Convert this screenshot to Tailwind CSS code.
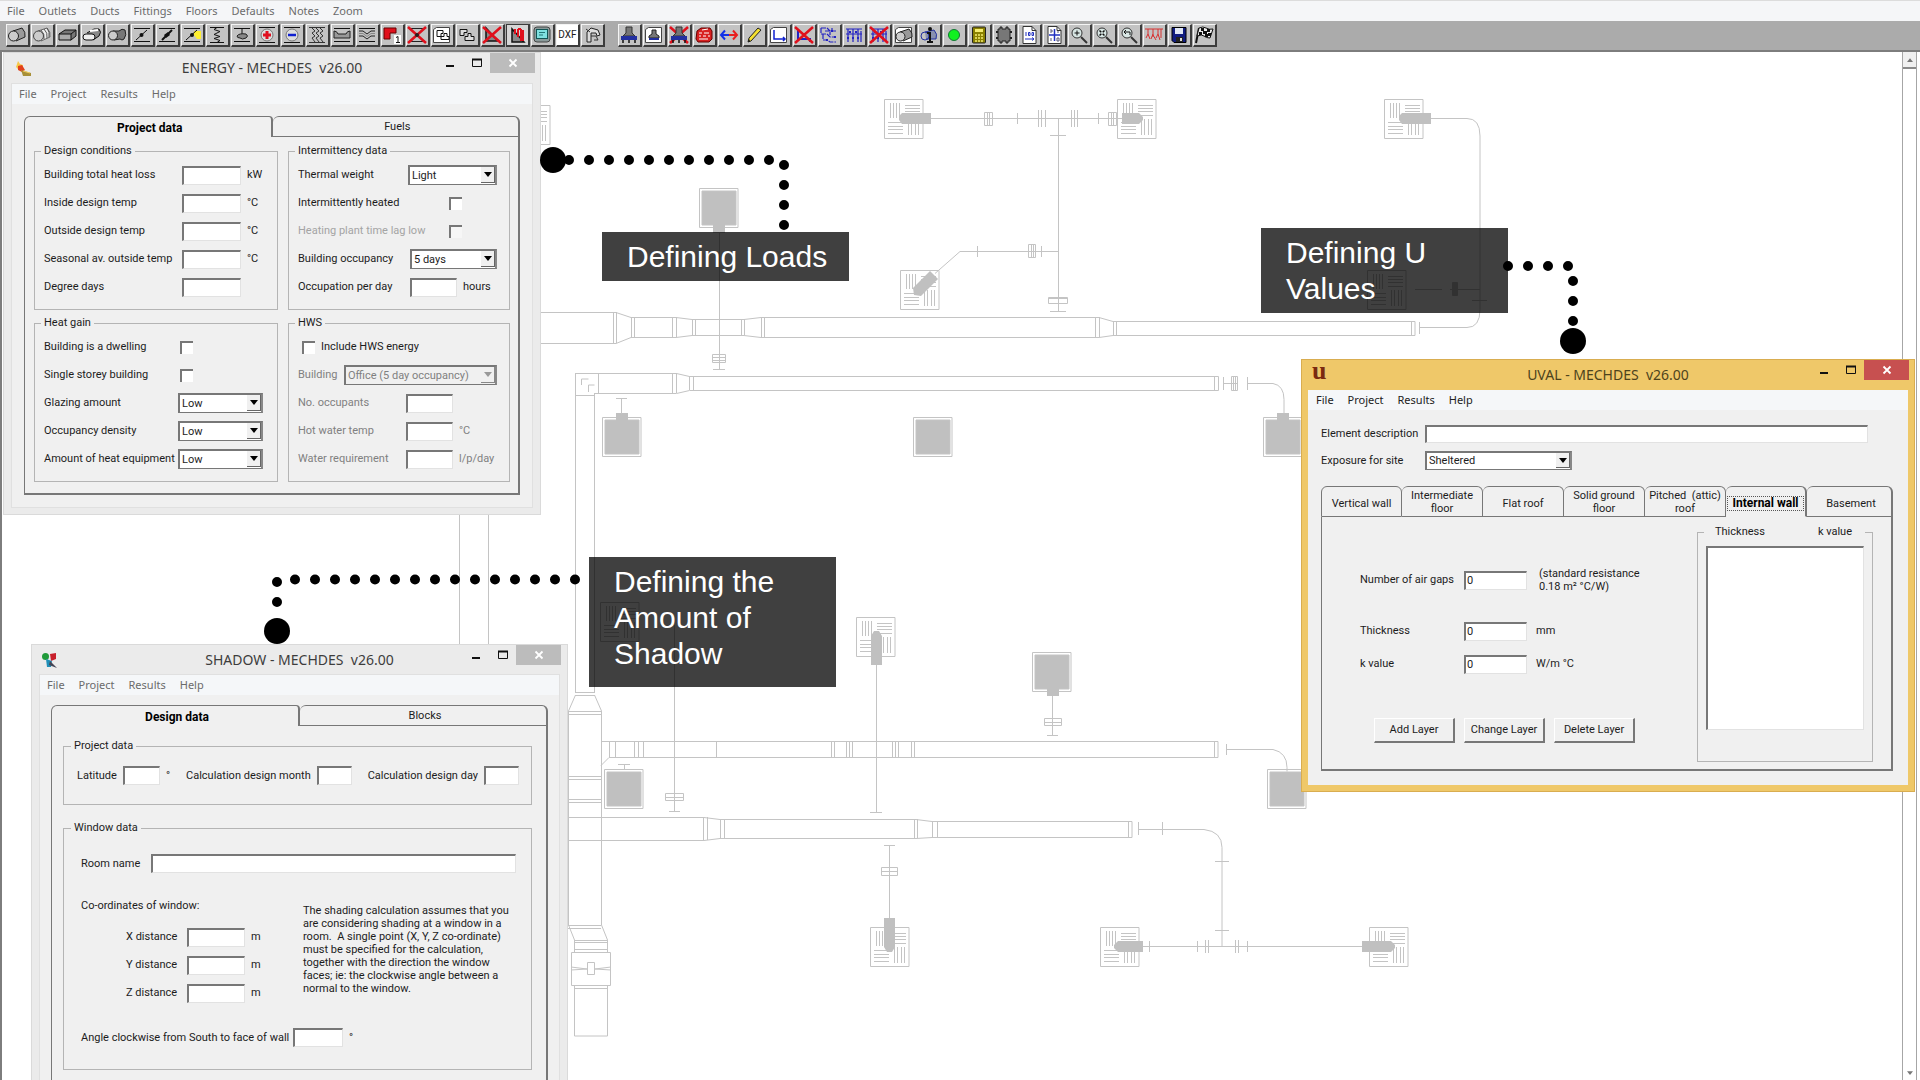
<!DOCTYPE html>
<html lang="en">
<head>
<meta charset="utf-8">
<title>MECHDES</title>
<script src="https://cdn.jsdelivr.net/npm/@tailwindcss/browser@4"></script>
</head>
<body class="flex h-screen flex-col overflow-hidden bg-white font-['Roboto','Liberation_Sans',sans-serif] text-[11px] leading-[14px] text-[#1c1c1c]">

<!-- shared drawing symbols -->
<svg width="0" height="0" class="absolute">
  <defs>
    <symbol id="grille" viewBox="0 0 40 40" overflow="visible">
      <path d="M.5 .5h38.500v39h-38.500z" fill="#fff" fill-opacity=".6" stroke="#c4c4c4"/>
      <path d="M6.500 4v15M9.500 4v15M12.500 4v15M15.500 4v15M21 6.500h15M21 9.500h15M21 12.500h15M21 16.500h15M4 23.500h15M4 27.500h15M4 30.500h15M4 34.500h15M24.500 20v16M27.500 20v16M31.500 20v16M34.500 20v16" stroke="#c4c4c4" fill="none"/>
    </symbol>
    <symbol id="unit" viewBox="0 0 40 40" overflow="visible">
      <path d="M.5 .5h38.500v39h-38.500z" fill="#fff" stroke="#c4c4c4"/>
      <path d="M3 3h34v34h-34z" fill="#c0c0c0"/>
    </symbol>
    <symbol id="cross" viewBox="0 0 20 18"><path d="M1 1L19 17M19 1L1 17" stroke="#e0101c" stroke-width="2.500"/></symbol>
    <symbol id="bars" viewBox="0 0 20 18"><path d="M2 2.500h16M2 15.500h16" stroke="#111" stroke-width="1.200"/></symbol>
    <symbol id="fan" viewBox="0 0 20 18"><path d="M7 1h6v6l3 3H4l3-3z" fill="#777" stroke="#333"/><path d="M2 10h16v4H2z" fill="#2330a0"/><path d="M4 14v3M10 14v3M16 14v3" stroke="#111" stroke-width="1.500"/></symbol>
    <symbol id="sheet" viewBox="0 0 20 18"><path d="M1.500 3.500l3-2h13v15h-16z" fill="#fff" stroke="#444"/></symbol>
    <symbol id="page" viewBox="0 0 20 18"><path d="M4 .5h9l4 4v13H4z" fill="#fff" stroke="#333"/><path d="M13 .5v4h4" fill="none" stroke="#333"/></symbol>
    <symbol id="net" viewBox="0 0 20 18"><path d="M2 3h16M2 8h16M4 3v13M9 3v13M14 3v13M17 5v11" fill="none" stroke="#2222c4" stroke-width="1.200"/><path d="M3 11h2v2H3zM8 11h2v2H8zM13 11h2v2h-2zM5 5h2v2H5zM11 5h2v2h-2z" fill="#2222c4"/></symbol>
    <symbol id="lens" viewBox="0 0 20 18"><circle cx="8" cy="7" r="5" fill="#d8e6e4" stroke="#333"/><path d="M12 11l6 6" stroke="#333" stroke-width="2"/></symbol>
    <symbol id="min" viewBox="0 0 12 12"><path d="M2 9h8" stroke="#111" stroke-width="2"/></symbol>
    <symbol id="max" viewBox="0 0 12 12"><path d="M1.500 2v7.500h9V2" fill="none" stroke="#111"/><path d="M1 2.500h10" stroke="#111" stroke-width="2"/></symbol>
    <symbol id="close" viewBox="0 0 12 12"><path d="M2.500 2.500l7 7M9.500 2.500l-7 7" stroke="#fff" stroke-width="1.800"/></symbol>
    <symbol id="down" viewBox="0 0 8 5"><path d="M0 0h8L4 5z" fill="currentColor"/></symbol>
  </defs>
</svg>

<nav class="flex h-[21px] shrink-0 items-center gap-[14px] border-t border-[#dcdcdc] bg-[#f5f6f8] pl-[7px] font-['Noto_Sans',sans-serif] text-[11px] text-[#6b6b6b]">
  <a href="#">File</a><a href="#">Outlets</a><a href="#">Ducts</a><a href="#">Fittings</a><a href="#">Floors</a><a href="#">Defaults</a><a href="#">Notes</a><a href="#">Zoom</a>
</nav>

<div role="toolbar" aria-label="Drawing tools" class="flex h-[29px] shrink-0 items-center gap-[13px] bg-[#ababab] pl-[6px] [&_button]:h-[23px] [&_button]:w-6 [&_button]:border-t [&_button]:border-l [&_button]:border-r-2 [&_button]:border-b-2 [&_button]:border-t-[#f4f4f4] [&_button]:border-l-[#f4f4f4] [&_button]:border-r-[#3c3c3c] [&_button]:border-b-[#3c3c3c] [&_button]:bg-[#c3c3c3] [&_svg]:h-[18px] [&_svg]:w-[20px] [&_svg]:fill-none">
  <div class="flex gap-px">
    <button aria-label="Round duct"><svg viewBox="0 0 20 18"><path d="M6 5l9-3q4 4 3 9l-9 4" fill="#999" stroke="#222"/><circle cx="6.500" cy="10" r="5" fill="#ccc" stroke="#222"/></svg></button>
    <button aria-label="Flexible duct"><svg viewBox="0 0 20 18"><path d="M6 5l9-3q4 4 3 9l-9 4" fill="#eee" stroke="#666"/><path d="M9 4q4 4 3 9M12 3q4 4 3 9M15 2q3 4 2 9" stroke="#555"/><circle cx="6.500" cy="10" r="5" fill="#ccc" stroke="#444"/></svg></button>
    <button aria-label="Rectangular duct"><svg viewBox="0 0 20 18"><path d="M2 8l6-4h11v6l-5 4z" fill="#777" stroke="#111"/><path d="M2 8h12v6H2z" fill="#aaa" stroke="#111"/><path d="M14 8l5-4" stroke="#111"/></svg></button>
    <button aria-label="Oval duct"><svg viewBox="0 0 20 18"><path d="M5 7l7-4h5q3 3 0 7l-6 4" fill="#888" stroke="#111"/><path d="M8 5l8-1" stroke="#fff" stroke-width="2"/><rect x="1" y="8" width="12" height="6" rx="3" fill="#eee" stroke="#111"/></svg></button>
    <button aria-label="Bent duct"><svg viewBox="0 0 20 18"><path d="M6 5h6q3-3 6-1 2 5-1 9-2 2-4 0l-6 1" fill="#777" stroke="#222"/><circle cx="6" cy="9.500" r="4.500" fill="#ccc" stroke="#222"/></svg></button>
    <button aria-label="Damper"><svg viewBox="0 0 20 18"><use href="#bars"/><path d="M4 14L15 4" stroke="#111"/><circle cx="9.500" cy="9" r="2" fill="#111"/></svg></button>
    <button aria-label="Fire damper"><svg viewBox="0 0 20 18"><use href="#bars"/><path d="M5 14L15 4" stroke="#111" stroke-width="2"/><path d="M7 9l4-3 2 3-4 3z" fill="#111"/></svg></button>
    <button aria-label="Motor damper"><svg viewBox="0 0 20 18"><use href="#bars"/><path d="M12 5h7v8h-4l-3-4z" fill="#ffef30"/><path d="M4 14L15 4" stroke="#111"/><circle cx="10" cy="9" r="2" fill="#111"/></svg></button>
    <button aria-label="Coil"><svg viewBox="0 0 20 18"><path d="M3 1.500h14M3 16.500h14M10 1.500l-3 2 6 2-6 3 6 2-6 2 6 2-3 2" stroke="#111"/></svg></button>
    <button aria-label="Sensor"><svg viewBox="0 0 20 18"><use href="#bars"/><path d="M10 2v6" stroke="#111"/><path d="M5 10q2-3 9-2 3 2 0 4-4 2-6 0-3 0-3-2z" fill="#888" stroke="#222"/></svg></button>
    <button aria-label="Heater"><svg viewBox="0 0 20 18"><path d="M2 1.500h16M2 16.500h16" stroke="#111"/><circle cx="10" cy="9" r="6" fill="#ddd" stroke="#777"/><path d="M10 5v8M6 9h8" stroke="#e01020" stroke-width="3"/></svg></button>
    <button aria-label="Cooler"><svg viewBox="0 0 20 18"><path d="M2 1.500h16M2 16.500h16" stroke="#111"/><circle cx="10" cy="9" r="6" fill="#ddd" stroke="#777"/><path d="M6 9h8" stroke="#1020d0" stroke-width="2.500"/></svg></button>
    <button aria-label="Filter"><svg viewBox="0 0 20 18"><path d="M2 1.500h16M2 16.500h16M5 2l3 3-3 2 3 3-3 2 3 4M9 2l3 3-3 2 3 3-3 2 3 4M13 2l3 3-3 2 3 3-3 2 3 4" stroke="#333"/></svg></button>
    <button aria-label="Silencer"><svg viewBox="0 0 20 18"><use href="#bars"/><path d="M2 5q3 0 4 3h8q1-3 4-3v7H2z" fill="#999" stroke="#222"/></svg></button>
    <button aria-label="Flexible joint"><svg viewBox="0 0 20 18"><use href="#bars"/><path d="M2 5h4l4 3 4-3h4M2 10h4l4 3 4-3h4" stroke="#222"/><path d="M2 7.500h4l4 3 4-3h4" stroke="#888"/></svg></button>
    <button aria-label="Bend 1"><svg viewBox="0 0 20 18"><path d="M2 2h12v5H8v6H2z" fill="#e0101c" stroke="#600"/><path d="M12 9h7v9h-7z" fill="#fff"/><path d="M14 11.500l2-1v6M14 16.500h4" stroke="#111"/></svg></button>
    <button aria-label="Delete fitting"><svg viewBox="0 0 20 18"><path d="M3 2.500h14M3 15.500h14" stroke="#222"/><use href="#cross"/><circle cx="10" cy="9" r="2" fill="#222"/></svg></button>
    <button aria-label="Copy floor"><svg viewBox="0 0 20 18"><use href="#sheet"/><path d="M5 4.500h6v3H9v3H5zM9 13.500v-3h3v-3h3v3h2v3z" stroke="#111"/></svg></button>
    <button aria-label="Copy"><svg viewBox="0 0 20 18"><path d="M3 3.500h7v3H7v3H3zM8 14.500v-4h3v-3h3v3h3v4z" fill="#ddd" stroke="#111"/></svg></button>
    <button aria-label="Delete triangle"><svg viewBox="0 0 20 18"><path d="M4 2v13h12z" fill="#888" stroke="#111" stroke-width="1.500"/><use href="#cross"/></svg></button>
    <button aria-label="Set square" aria-pressed="true" class="border-t-[#3c3c3c]! border-l-[#3c3c3c]! bg-[#d6d6d6]!"><svg viewBox="0 0 20 18"><path d="M5 3v13h12z" fill="#888" stroke="#111" stroke-width="1.500"/><path d="M8 3v5M11 3v8M14 3v12M11 3h3M16 4v11" stroke="#e0101c" stroke-width="2"/></svg></button>
    <button aria-label="Screen"><svg viewBox="0 0 20 18"><rect x="2" y="1" width="16" height="15" rx="3" fill="#8a9a9a" stroke="#444"/><rect x="4.500" y="3.500" width="11" height="9" fill="#7fe0e0" stroke="#155"/><path d="M7 6.500h6M7 9h4" stroke="#277"/></svg></button>
    <button class="bg-white! text-[10px] leading-[18px]">DXF</button>
    <button aria-label="Robot"><svg viewBox="0 0 20 18"><path d="M5 16V6l4-4 7 2 2 5-3 1-1-3H9v9z" fill="#ddd" stroke="#222"/><path d="M4 3l4 3M9 10h5l2 4h-4" stroke="#333"/></svg></button>
  </div>
  <div class="flex gap-px">
    <button aria-label="Fan"><svg viewBox="0 0 20 18"><use href="#fan"/></svg></button>
    <button aria-label="Fan sheet"><svg viewBox="0 0 20 18"><use href="#sheet"/><path d="M8 4h4v4l3 2v2H5v-2l3-2z" fill="#777" stroke="#222"/><path d="M5 12h10v2H5z" fill="#2330a0"/></svg></button>
    <button aria-label="Delete fan"><svg viewBox="0 0 20 18"><use href="#cross"/><use href="#fan"/></svg></button>
    <button aria-label="Supplier"><svg viewBox="0 0 20 18"><path d="M3 5l4-3h9l2 3v8l-3 3H4l-2-3z" fill="#d82020" stroke="#600"/><path d="M5 7h3M10 7h5M5 10h2M9 10h3M14 10h2M5 13h9M8 4l6-1" stroke="#fff"/></svg></button>
    <button aria-label="Move"><svg viewBox="0 0 20 18"><path d="M10 9H2M6 4.500L2 9l4 4.500" stroke="#1030e8" stroke-width="2"/><path d="M10 9h8M14 4.500L18 9l-4 4.500" stroke="#e82020" stroke-width="2"/></svg></button>
    <button aria-label="Pencil"><svg viewBox="0 0 20 18"><path d="M4 16l1-4L14 2l3 2L7 15z" fill="#f4e030" stroke="#222"/><path d="M4 16l1-3 1 2z" fill="#111"/></svg></button>
    <button aria-label="Draw line"><svg viewBox="0 0 20 18"><use href="#sheet"/><path d="M5 4v9h11M14 11l2 2-2 2" stroke="#1020d0" stroke-width="1.500"/></svg></button>
    <button aria-label="Delete line"><svg viewBox="0 0 20 18"><path d="M4 4v9h12v3" stroke="#2222c4" stroke-width="2"/><use href="#cross"/></svg></button>
    <button aria-label="Network"><svg viewBox="0 0 20 18"><path d="M2 2h6l3 3h6M2 2v6h6l3 3h6M4 8v6h4l3 2h6M6 5h5v4M13 2v3" stroke="#2222c4" stroke-width="1.200" stroke-dasharray="5 1"/><path d="M12 4h2v2h-2zM15 10h2v2h-2zM7 13h2v2H7z" fill="#2222c4"/></svg></button>
    <button aria-label="Network grid"><svg viewBox="0 0 20 18"><use href="#net"/></svg></button>
    <button aria-label="Delete network"><svg viewBox="0 0 20 18"><use href="#net"/><use href="#cross"/></svg></button>
    <button aria-label="Duct sheet"><svg viewBox="0 0 20 18"><use href="#sheet"/><path d="M6 6l9-3q4 4 3 8l-9 4" fill="#999" stroke="#222"/><circle cx="6.500" cy="10.500" r="4.500" fill="#ccc" stroke="#222"/></svg></button>
    <button aria-label="Duct info"><svg viewBox="0 0 20 18"><path d="M6 6l9-2q4 4 2 9H7" fill="#8890b0" stroke="#2230a0"/><circle cx="6" cy="10" r="4" stroke="#2230a0"/><circle cx="11" cy="3" r="2" fill="#111"/><path d="M11 6v10M8 7h3M8 16h6" stroke="#111" stroke-width="2"/></svg></button>
    <button aria-label="Run"><svg viewBox="0 0 20 18"><circle cx="10" cy="9" r="5.500" fill="#10f020" stroke="#173"/></svg></button>
    <button aria-label="Calculator"><svg viewBox="0 0 20 18"><rect x="3.500" y="1" width="13" height="16" rx="1" fill="#8a8000" stroke="#222"/><path d="M6 3h8v3H6z" fill="#f4ec70"/><path d="M6 9h8M6 12h8M6 15h8" stroke="#f4ec70" stroke-width="1.500" stroke-dasharray="2 1"/></svg></button>
    <button aria-label="Chip"><svg viewBox="0 0 20 18"><path d="M4 3h2V1h2v2h4V1h2v2h2v12h-2v2h-2v-2H8v2H6v-2H4z" fill="#777" stroke="#222"/><path d="M2 6h2M2 12h2M16 6h2M16 12h2" stroke="#222" stroke-width="2"/></svg></button>
    <button aria-label="Scale"><svg viewBox="0 0 20 18"><use href="#page"/><path d="M7 6v4M9.500 6.500h1.500v3h-1.500zM13 6.500h1.500v3H13zM6 13h9M13 11.500l2 1.500-2 1.500" stroke="#2030c0"/></svg></button>
    <button aria-label="Grid"><svg viewBox="0 0 20 18"><use href="#page"/><path d="M10.500 3v12M5 9h11" stroke="#2030c0" stroke-width="1.500"/><path d="M6 4h2v2H6M13 6h2M7 12v3M13 12h2v3h-2z" stroke="#557"/></svg></button>
    <button aria-label="Zoom in"><svg viewBox="0 0 20 18"><use href="#lens"/><path d="M5.500 7h5M8 4.500v5" stroke="#111"/></svg></button>
    <button aria-label="Zoom all"><svg viewBox="0 0 20 18"><use href="#lens"/><path d="M5.500 4.500l5 5M10.500 4.500l-5 5" stroke="#111" stroke-width="1.500" stroke-dasharray="2.500 2"/></svg></button>
    <button aria-label="Zoom previous"><svg viewBox="0 0 20 18"><use href="#lens"/><path d="M11 9V6H5M7 4L5 6l2 2" stroke="#111"/></svg></button>
    <button aria-label="Layout"><svg viewBox="0 0 20 18"><path d="M1 3h18M4 3v5M9 3v8M14 3v5M17 3v9M4 8l-2 4M4 8l2 5M9 8l-2 5M9 9l3 5M14 8l-2 4M14 8l2 6" stroke="#d83030"/></svg></button>
    <button aria-label="Save"><svg viewBox="0 0 20 18"><path d="M3 1.500h14v15H5l-2-2z" fill="#101c80" stroke="#000"/><path d="M6 2h8v6H6z" fill="#dfe6f4"/><path d="M7 11h7v5H7z" fill="#222"/><path d="M11 12h2v3h-2z" fill="#ddd"/></svg></button>
    <button aria-label="Finish"><svg viewBox="0 0 20 18"><path d="M5 2l-3 15" stroke="#111" stroke-width="2"/><path d="M5 2q4-2 7 0t7 1l-3 9q-4 0-6-2t-7 0z" fill="#eee" stroke="#111"/><path d="M7 2h3v3H7zM13 3h3v3h-3zM9 5h4v3H9zM14 7h3v3h-3zM5 6h3v3H5zM11 8h3v3h-3z" fill="#111"/></svg></button>
  </div>
</div>

<main class="relative flex-1 overflow-hidden border-t-2 border-l-2 border-[#7d7d7d] bg-white">

  <!-- ductwork plan -->
  <svg class="absolute inset-0 h-full w-full" aria-label="Ductwork plan">
    <g transform="translate(-2 -52)" fill="none" stroke="#c4c4c4">
      <path d="M459.500 500V650M488.500 500V650"/>
      <use href="#grille" x="511" y="105" width="40" height="40"/>
      <use href="#grille" x="884" y="99" width="40" height="40"/>
      <use href="#grille" x="1117" y="99" width="40" height="40"/>
      <use href="#grille" x="1384" y="99" width="40" height="40"/>
      <use href="#grille" x="900" y="270" width="40" height="40"/>
      <use href="#grille" x="1367" y="270" width="40" height="40"/>
      <use href="#grille" x="600" y="602" width="40" height="40"/>
      <use href="#grille" x="856" y="617" width="40" height="40"/>
      <use href="#grille" x="870" y="927" width="40" height="40"/>
      <use href="#grille" x="1100" y="927" width="40" height="40"/>
      <use href="#grille" x="1369" y="927" width="40" height="40"/>
      <use href="#unit" x="699" y="188" width="40" height="40"/>
      <use href="#unit" x="602" y="417" width="40" height="40"/>
      <use href="#unit" x="913" y="417" width="40" height="40"/>
      <use href="#unit" x="1263" y="417" width="40" height="40"/>
      <use href="#unit" x="1032" y="652" width="40" height="40"/>
      <use href="#unit" x="604" y="769" width="40" height="40"/>
      <use href="#unit" x="1267" y="769" width="40" height="40"/>
      <g fill="#c0c0c0" stroke="none">
        <path d="M713 223h12v10h-12zM616 413h12v8h-12zM1277 413h12v8h-12zM1047 686h12v10h-12z"/>
        <path d="M931 113v11h-29l-3-4v-4l3-3zM1122 113h17l4 4v3l-4 4h-17zM1431 113v11h-29l-3-4v-4l3-3z"/>
        <path d="M871 665v-29l3-5h5l3 5v29zM884 918h11v29l-3 5h-5l-3-5zM1143 941v11h-25l-4-4v-3l4-4zM1362 941h29l4 4v3l-4 4h-29z"/>
        <path d="M930 271l8 8-17 17-7-1-1-7z"/>
      </g>
      <!-- top trunk -->
      <path d="M541 312.500h75l15 5h45l16 2h52l17-2h338l14 4h302v14h-302l-14 2h-338l-17-2h-52l-16 2h-45l-15 6h-75M613.500 312v31M616.500 312v31M631.500 317v20M634.500 317v20M672.500 317v20M676.500 317v20M692.500 319v16M695.500 319v16M741.500 319v16M744.500 319v16M761.500 317v20M764.500 317v20M1095.500 317v20M1099.500 317v20M1113.500 321v14M1116.500 321v14M1411.500 321v14"/>
      <path d="M1419.500 322v12M1419 327.500h48q13 0 13-18V136q0-17.500-13-17.500h-36M1415 289.500h27M1450 289.500h30M1472 300.500h15"/>
      <path d="M1452.500 282.500h5v13h-5z" fill="#c4c4c4"/>
      <!-- top branch -->
      <path d="M931 118.500h191M984.500 112.500h8v13h-8zM987.500 112v13M989.500 112v13M1017.500 113v11M1038.500 110v17M1041.500 110v17M1045.500 110v17M1071.500 110v17M1074.500 110v17M1077.500 110v17M1098.500 113v11M1108.500 112.500h8v13h-8zM1111.500 112v13M1113.500 112v13M1058.500 118v193M1050 135.500h16M1048.500 297.500h19v6h-19zM1048 298.500h19M1050 311.500h16M1058 251.500h-98l-25 22M977.500 246v11M1041.500 246v11M1028.500 244.500h7v13h-7zM1031.500 244v13M1033.500 244v13"/>
      <!-- second trunk -->
      <path d="M575.500 373.500h101l13 3h529v14h-529l-13 3h-82M575.500 373v319M594.500 393v299M598.500 373v20M575 395.500h19M581.500 385v-6h7M588.500 392v-7h6M672.500 373v20M676.500 373v20M689.500 376v14M693.500 376v14M1214.500 376v14M1223.500 377v13M1223 383.500h14M1231.500 376.500h6v14h-6zM1233.500 376v14M1235.500 376v14M1247.500 377v13M1247 383.500h26q11 2 11 16v14"/>
      <path d="M719.500 232v137M712.500 354.500h13v8h-13zM712 357.500h13M712 360.500h13M713 369.500h12M621.500 398v16M616 398.500h11"/>
      <!-- riser -->
      <path d="M575 692.500h20M575 695.500h20M575.500 695l-7 16v214l6 15v12M594.500 695l7 16v214l6 15v12M568 711.500h33M568 714.500h33M568 776.500h33M568 779.500h33M568 799.500h33M568 802.500h33M568 925.500h33M568 928.500h33M574 940.500h33M574 942.500h33M574 949.500h33M571.500 952.500h39v33h-39zM587.500 962.500h7v12h-7zM571 967l16 2-16 1M611 967l-16 2 16 1M574.500 985v51h33v-51M574 988.500h33"/>
      <!-- branch duct -->
      <path d="M601 741.500h617v16H609l-8 8M609.500 741v16M615.500 741v16M634.500 741v16M638.500 741v16M643.500 741v16M716.500 741v16M831.500 741v16M834.500 741v16M846.500 741v16M849.500 741v16M852.500 741v16M892.500 741v16M895.500 741v16M898.500 741v16M911.500 741v16M914.500 741v16M1214.500 741v16M1226.500 744v11M1226 749.500h47q14 3 14 18v4"/>
      <!-- lower trunk -->
      <path d="M568 817.500h136l16 2h196l16 2h200v16H932l-16 1H720l-16 2H568M703.500 817v23M707.500 817v23M720.500 819v19M724.500 819v19M914.500 819v19M917.500 819v19M932.500 821v16M937.500 821v16M1128.500 821v16M1138.500 822v13M1138 829.500h66q18 2 18 18v99M1162.500 822v13M1215 861.500h14M1215 930.500h14"/>
      <path d="M1143 946.500h219M1149.500 941v11M1197.500 941v11M1205.500 940v13M1208.500 940v13M1235.500 940v13M1238.500 940v13M1247.500 941v11"/>
      <path d="M674.500 625v186M665.500 793.500h18v7h-18zM665 797.500h18M669 811.500h11M876.500 665v147M870 812.500h12M1052.500 696v39M1044.500 718.500h17v7h-17zM1044 722.500h17M1047 735.500h11M889.500 845v73M884 845.500h11M881.500 867.500h16v8h-16zM881 871.500h16M624.500 764v6M618 764.500h12"/>
    </g>
  </svg>

  <!-- canvas scroll bar -->
  <div class="absolute inset-y-0 right-[3px] flex w-[15px] flex-col justify-between border-x border-[#a6a6a6] bg-white">
    <button aria-label="Scroll up" class="grid h-[17px] place-items-center border-b-2 border-[#8a8a8a] bg-[#f0f0f0] text-[#777]"><svg class="h-[4px] w-[6px] rotate-180"><use href="#down"/></svg></button>
    <button aria-label="Scroll down" class="grid h-[15px] place-items-center text-[#777]"><svg class="h-[4px] w-[6px]"><use href="#down"/></svg></button>
  </div>

  <!-- ENERGY -->
  <section class="absolute top-0 left-px w-[538px] border border-[#dadada] bg-[#ebebeb] px-[7px] pb-[6px]">
    <header class="-mx-[2px] grid h-[30px] grid-cols-[105px_1fr_105px]">
      <svg class="mt-[7px] ml-[6px] size-[17px]" viewBox="0 0 17 17"><path d="M3 1l2 3 3 1 0 4-4 1-3-3z" fill="#f6c84a"/><path d="M3 6l4-1 3 5-3 2-4-2z" fill="#e2401c"/><path d="M6 10l10 3v3H8z" fill="#a89038"/><path d="M8 11l7 2" stroke="#f2d060"/></svg>
      <h2 class="self-center text-center font-['Noto_Sans',sans-serif] text-[14px] leading-5 whitespace-pre text-[#3d3d3d]">ENERGY - MECHDES  v26.00</h2>
      <div class="flex items-start justify-end">
        <button aria-label="Minimise" class="grid h-5 w-[27px] place-items-center"><svg class="size-3"><use href="#min"/></svg></button>
        <button aria-label="Maximise" class="grid h-5 w-[27px] place-items-center"><svg class="size-3"><use href="#max"/></svg></button>
        <button aria-label="Close" class="grid h-5 w-[45px] place-items-center bg-[#bcbcbc]"><svg class="size-3"><use href="#close"/></svg></button>
      </div>
    </header>
    <div class="border border-[#e0e0e0] bg-[#f0f0f0]">
      <nav class="flex h-5 items-center gap-[14px] bg-[#f5f7f9] pl-[7px] font-['Noto_Sans',sans-serif] text-[#6b6b6b]"><a href="#">File</a><a href="#">Project</a><a href="#">Results</a><a href="#">Help</a></nav>
      <div class="px-3 pt-3 pb-3">
        <div role="tablist" class="flex h-[21px]">
          <button role="tab" aria-selected="true" class="flex-1 rounded-tl-md rounded-tr-sm border-t border-r-2 border-l border-[#777] pt-px pl-1 text-[12px] font-bold text-black">Project data</button>
          <button role="tab" class="flex-1 rounded-t-md border-t border-r-2 border-b border-[#777] pl-1">Fuels</button>
        </div>
        <div class="grid grid-cols-[244px_222px] gap-x-[10px] gap-y-[6px] border-r-2 border-b-2 border-l border-[#777] pt-[7px] pb-[11px] pl-[9px]">
          <fieldset class="h-[166px] border border-[#b4b4b4] pt-[3px] pl-[9px]">
            <legend class="-ml-[3px] px-[3px]">Design conditions</legend>
            <div class="flex h-7 items-center"><label for="e1" class="w-[138px]">Building total heat loss</label><input id="e1" class="mr-[6px] h-[19px] w-[59px] border-t-2 border-r border-b border-l-2 border-t-[#777] border-r-[#e2e2e2] border-b-[#e2e2e2] border-l-[#777] bg-white">kW</div>
            <div class="flex h-7 items-center"><label for="e2" class="w-[138px]">Inside design temp</label><input id="e2" class="mr-[6px] h-[19px] w-[59px] border-t-2 border-r border-b border-l-2 border-t-[#777] border-r-[#e2e2e2] border-b-[#e2e2e2] border-l-[#777] bg-white">°C</div>
            <div class="flex h-7 items-center"><label for="e3" class="w-[138px]">Outside design temp</label><input id="e3" class="mr-[6px] h-[19px] w-[59px] border-t-2 border-r border-b border-l-2 border-t-[#777] border-r-[#e2e2e2] border-b-[#e2e2e2] border-l-[#777] bg-white">°C</div>
            <div class="flex h-7 items-center"><label for="e4" class="w-[138px]">Seasonal av. outside temp</label><input id="e4" class="mr-[6px] h-[19px] w-[59px] border-t-2 border-r border-b border-l-2 border-t-[#777] border-r-[#e2e2e2] border-b-[#e2e2e2] border-l-[#777] bg-white">°C</div>
            <div class="flex h-7 items-center"><label for="e5" class="w-[138px]">Degree days</label><input id="e5" class="h-[19px] w-[59px] border-t-2 border-r border-b border-l-2 border-t-[#777] border-r-[#e2e2e2] border-b-[#e2e2e2] border-l-[#777] bg-white"></div>
          </fieldset>
          <fieldset class="h-[166px] border border-[#b4b4b4] pt-[3px] pl-[9px]">
            <legend class="-ml-[3px] px-[3px]">Intermittency data</legend>
            <div class="flex h-7 items-center"><label for="e6" class="w-[110px]">Thermal weight</label><span class="relative h-5 w-[89px]"><select id="e6" class="h-full w-full appearance-none border-2 border-r-[#888] border-b border-[#777] bg-white pl-[2px]"><option>Light</option></select><span class="pointer-events-none absolute inset-y-[2px] right-[2px] grid w-[14px] place-items-center border-r border-b border-[#666] bg-[#f0f0f0] text-black"><svg class="h-[5px] w-2"><use href="#down"/></svg></span></span></div>
            <div class="flex h-7 items-center"><label for="e7" class="w-[151px]">Intermittently heated</label><input id="e7" type="checkbox" class="size-[13px] appearance-none border-t-2 border-l-2 border-[#777] bg-white"></div>
            <div class="flex h-7 items-center"><label for="e8" class="w-[151px] text-[#a4a4a4]">Heating plant time lag low</label><input id="e8" type="checkbox" disabled class="size-[13px] appearance-none border-t-2 border-l-2 border-[#777] bg-[#f6f6f6]"></div>
            <div class="flex h-7 items-center"><label for="e9" class="w-[112px]">Building occupancy</label><span class="relative h-5 w-[87px]"><select id="e9" class="h-full w-full appearance-none border-2 border-r-[#888] border-b border-[#777] bg-white pl-[2px]"><option>5 days</option></select><span class="pointer-events-none absolute inset-y-[2px] right-[2px] grid w-[14px] place-items-center border-r border-b border-[#666] bg-[#f0f0f0] text-black"><svg class="h-[5px] w-2"><use href="#down"/></svg></span></span></div>
            <div class="flex h-7 items-center"><label for="e10" class="w-[112px]">Occupation per day</label><input id="e10" class="mr-[6px] h-[19px] w-[47px] border-t-2 border-r border-b border-l-2 border-t-[#777] border-r-[#e2e2e2] border-b-[#e2e2e2] border-l-[#777] bg-white">hours</div>
          </fieldset>
          <fieldset class="h-[166px] border border-[#b4b4b4] pt-[3px] pl-[9px]">
            <legend class="-ml-[3px] px-[3px]">Heat gain</legend>
            <div class="flex h-7 items-center"><label for="e11" class="w-[136px]">Building is a dwelling</label><input id="e11" type="checkbox" class="size-[13px] appearance-none border-t-2 border-l-2 border-[#777] bg-white"></div>
            <div class="flex h-7 items-center"><label for="e12" class="w-[136px]">Single storey building</label><input id="e12" type="checkbox" class="size-[13px] appearance-none border-t-2 border-l-2 border-[#777] bg-white"></div>
            <div class="flex h-7 items-center"><label for="e13" class="w-[134px]">Glazing amount</label><span class="relative h-5 w-[85px]"><select id="e13" class="h-full w-full appearance-none border-2 border-r-[#888] border-b border-[#777] bg-white pl-[2px]"><option>Low</option></select><span class="pointer-events-none absolute inset-y-[2px] right-[2px] grid w-[14px] place-items-center border-r border-b border-[#666] bg-[#f0f0f0] text-black"><svg class="h-[5px] w-2"><use href="#down"/></svg></span></span></div>
            <div class="flex h-7 items-center"><label for="e14" class="w-[134px]">Occupancy density</label><span class="relative h-5 w-[85px]"><select id="e14" class="h-full w-full appearance-none border-2 border-r-[#888] border-b border-[#777] bg-white pl-[2px]"><option>Low</option></select><span class="pointer-events-none absolute inset-y-[2px] right-[2px] grid w-[14px] place-items-center border-r border-b border-[#666] bg-[#f0f0f0] text-black"><svg class="h-[5px] w-2"><use href="#down"/></svg></span></span></div>
            <div class="flex h-7 items-center"><label for="e15" class="w-[134px] whitespace-nowrap">Amount of heat equipment</label><span class="relative h-5 w-[85px]"><select id="e15" class="h-full w-full appearance-none border-2 border-r-[#888] border-b border-[#777] bg-white pl-[2px]"><option>Low</option></select><span class="pointer-events-none absolute inset-y-[2px] right-[2px] grid w-[14px] place-items-center border-r border-b border-[#666] bg-[#f0f0f0] text-black"><svg class="h-[5px] w-2"><use href="#down"/></svg></span></span></div>
          </fieldset>
          <fieldset class="h-[166px] border border-[#b4b4b4] pt-[3px] pl-[9px] text-[#808080]">
            <legend class="-ml-[3px] px-[3px] text-[#1c1c1c]">HWS</legend>
            <div class="flex h-7 items-center gap-[6px] pl-1 text-[#1c1c1c]"><input id="e16" type="checkbox" class="size-[13px] appearance-none border-t-2 border-l-2 border-[#777] bg-white"><label for="e16">Include HWS energy</label></div>
            <div class="flex h-7 items-center"><label for="e17" class="w-[46px]">Building</label><span class="relative h-5 w-[153px]"><select id="e17" disabled class="h-full w-full appearance-none border-2 border-r-[#888] border-b border-[#777] bg-[#f0f0f0] pl-[2px] opacity-100"><option>Office (5 day occupancy)</option></select><span class="pointer-events-none absolute inset-y-[2px] right-[2px] grid w-[14px] place-items-center border-r border-b border-[#888] bg-[#f0f0f0] text-[#999]"><svg class="h-[5px] w-2"><use href="#down"/></svg></span></span></div>
            <div class="flex h-7 items-center"><label for="e18" class="w-[108px]">No. occupants</label><input id="e18" disabled class="h-[19px] w-[47px] border-t-2 border-r border-b border-l-2 border-t-[#777] border-r-[#e2e2e2] border-b-[#e2e2e2] border-l-[#777] bg-white"></div>
            <div class="flex h-7 items-center"><label for="e19" class="w-[108px]">Hot water temp</label><input id="e19" disabled class="mr-[6px] h-[19px] w-[47px] border-t-2 border-r border-b border-l-2 border-t-[#777] border-r-[#e2e2e2] border-b-[#e2e2e2] border-l-[#777] bg-white">°C</div>
            <div class="flex h-7 items-center"><label for="e20" class="w-[108px]">Water requirement</label><input id="e20" disabled class="mr-[6px] h-[19px] w-[47px] border-t-2 border-r border-b border-l-2 border-t-[#777] border-r-[#e2e2e2] border-b-[#e2e2e2] border-l-[#777] bg-white">l/p/day</div>
          </fieldset>
        </div>
      </div>
    </div>
  </section>

  <!-- SHADOW -->
  <section class="absolute top-[592px] left-[29px] w-[537px] border border-[#dadada] bg-[#ebebeb] px-[7px] pb-[6px]">
    <header class="-mx-[1px] grid h-[29px] grid-cols-[105px_1fr_105px]">
      <svg class="mt-[7px] ml-[3px] size-[17px]" viewBox="0 0 17 17"><circle cx="4.500" cy="4.500" r="3.500" fill="#1f9a3a"/><path d="M9 2l6-1v6l-5 2z" fill="#c8202c"/><path d="M5 7l6 2-1 6H6z" fill="#1f8fb8"/><path d="M9 9l7 7-8-3z" fill="#445"/></svg>
      <h2 class="self-center text-center font-['Noto_Sans',sans-serif] text-[14px] leading-5 whitespace-pre text-[#3d3d3d]">SHADOW - MECHDES  v26.00</h2>
      <div class="flex items-start justify-end">
        <button aria-label="Minimise" class="grid h-5 w-[27px] place-items-center"><svg class="size-3"><use href="#min"/></svg></button>
        <button aria-label="Maximise" class="grid h-5 w-[27px] place-items-center"><svg class="size-3"><use href="#max"/></svg></button>
        <button aria-label="Close" class="grid h-5 w-[45px] place-items-center bg-[#bcbcbc]"><svg class="size-3"><use href="#close"/></svg></button>
      </div>
    </header>
    <div class="border border-[#e0e0e0] bg-[#f0f0f0]">
      <nav class="flex h-5 items-center gap-[14px] bg-[#f5f7f9] pl-[7px] font-['Noto_Sans',sans-serif] text-[#6b6b6b]"><a href="#">File</a><a href="#">Project</a><a href="#">Results</a><a href="#">Help</a></nav>
      <div class="px-[11px] pt-[10px] pb-3">
        <div role="tablist" class="flex h-[21px]">
          <button role="tab" aria-selected="true" class="flex-1 rounded-tl-md rounded-tr-sm border-t border-r-2 border-l border-[#777] pt-px pl-1 text-[12px] font-bold text-black">Design data</button>
          <button role="tab" class="flex-1 rounded-t-md border-t border-r-2 border-b border-[#777] pl-1">Blocks</button>
        </div>
        <div class="border-r-2 border-b-2 border-l border-[#777] pt-[13px] pr-[14px] pb-10 pl-[11px]">
          <fieldset class="border border-[#b4b4b4] pt-[13px] pr-3 pb-[19px] pl-[13px]">
            <legend class="-ml-[6px] px-[3px]">Project data</legend>
            <div class="flex items-center justify-between">
              <div class="flex items-center gap-[6px]"><label for="s1" class="w-10">Latitude</label><input id="s1" class="h-[19px] w-[37px] border-t-2 border-r border-b border-l-2 border-t-[#777] border-r-[#e2e2e2] border-b-[#e2e2e2] border-l-[#777] bg-white">°</div>
              <div class="flex items-center gap-[6px]"><label for="s2">Calculation design month</label><input id="s2" class="h-[19px] w-[35px] border-t-2 border-r border-b border-l-2 border-t-[#777] border-r-[#e2e2e2] border-b-[#e2e2e2] border-l-[#777] bg-white"></div>
              <div class="flex items-center gap-[6px]"><label for="s3">Calculation design day</label><input id="s3" class="h-[19px] w-[35px] border-t-2 border-r border-b border-l-2 border-t-[#777] border-r-[#e2e2e2] border-b-[#e2e2e2] border-l-[#777] bg-white"></div>
            </div>
          </fieldset>
          <fieldset class="mt-4 border border-[#b4b4b4] pt-[19px] pr-[15px] pb-[22px] pl-[17px]">
            <legend class="-ml-[10px] px-[3px]">Window data</legend>
            <div class="flex items-center"><label for="s4" class="w-[70px]">Room name</label><input id="s4" class="h-[19px] flex-1 border-t-2 border-r border-b border-l-2 border-t-[#777] border-r-[#e2e2e2] border-b-[#e2e2e2] border-l-[#777] bg-white"></div>
            <div class="flex">
              <div class="w-[222px] pt-[26px]">
                <p class="mb-[10px]">Co-ordinates of window:</p>
                <div class="flex h-7 items-center pl-[45px]"><label for="s5" class="w-[61px]">X distance</label><input id="s5" class="mr-[6px] h-[19px] w-[58px] border-t-2 border-r border-b border-l-2 border-t-[#777] border-r-[#e2e2e2] border-b-[#e2e2e2] border-l-[#777] bg-white">m</div>
                <div class="flex h-7 items-center pl-[45px]"><label for="s6" class="w-[61px]">Y distance</label><input id="s6" class="mr-[6px] h-[19px] w-[58px] border-t-2 border-r border-b border-l-2 border-t-[#777] border-r-[#e2e2e2] border-b-[#e2e2e2] border-l-[#777] bg-white">m</div>
                <div class="flex h-7 items-center pl-[45px]"><label for="s7" class="w-[61px]">Z distance</label><input id="s7" class="mr-[6px] h-[19px] w-[58px] border-t-2 border-r border-b border-l-2 border-t-[#777] border-r-[#e2e2e2] border-b-[#e2e2e2] border-l-[#777] bg-white">m</div>
              </div>
              <p class="pt-[31px] leading-[13px] whitespace-nowrap">The shading calculation assumes that you<br>are considering shading at a window in a<br>room.&nbsp; A single point (X, Y, Z co-ordinate)<br>must be specified for the calculation,<br>together with the direction the window<br>faces; ie: the clockwise angle between a<br>normal to the window.</p>
            </div>
            <div class="mt-[21px] flex items-center"><label for="s8" class="w-[212px]">Angle clockwise from South to face of wall</label><input id="s8" class="mr-[6px] h-[19px] w-[50px] border-t-2 border-r border-b border-l-2 border-t-[#777] border-r-[#e2e2e2] border-b-[#e2e2e2] border-l-[#777] bg-white">°</div>
          </fieldset>
        </div>
      </div>
    </div>
  </section>

  <!-- UVAL -->
  <section class="absolute top-[307px] left-[1299px] w-[614px] border border-[#d9ad50] bg-[#efc869] px-[6px] pb-[6px]">
    <header class="-mx-[1px] grid h-[30px] grid-cols-[105px_1fr_105px]">
      <span class="pl-[5px] font-['Liberation_Serif',serif] text-[26px] leading-[22px] font-bold text-[#7a2a10]">u</span>
      <h2 class="self-center text-center font-['Noto_Sans',sans-serif] text-[14px] leading-5 whitespace-pre text-[#4d431c]">UVAL - MECHDES  v26.00</h2>
      <div class="flex items-start justify-end">
        <button aria-label="Minimise" class="grid h-5 w-[27px] place-items-center"><svg class="size-3"><use href="#min"/></svg></button>
        <button aria-label="Maximise" class="grid h-5 w-[27px] place-items-center"><svg class="size-3"><use href="#max"/></svg></button>
        <button aria-label="Close" class="grid h-5 w-[45px] place-items-center bg-[#c75050]"><svg class="size-3"><use href="#close"/></svg></button>
      </div>
    </header>
    <div class="bg-[#f0f0f0]">
      <nav class="flex h-5 items-center gap-[14px] bg-[#f5f7f9] pl-2 font-['Noto_Sans',sans-serif] text-[#222]"><a href="#">File</a><a href="#">Project</a><a href="#">Results</a><a href="#">Help</a></nav>
      <div class="pt-[15px] pr-[15px] pb-[14px] pl-[13px]">
        <div class="flex items-center pr-[25px]"><label for="u1" class="w-[104px]">Element description</label><input id="u1" class="h-[18px] flex-1 border-t-2 border-r border-b border-l-2 border-t-[#777] border-r-[#e2e2e2] border-b-[#e2e2e2] border-l-[#777] bg-white"></div>
        <div class="mt-2 flex items-center"><label for="u2" class="w-[104px]">Exposure for site</label><span class="relative h-[19px] w-[147px]"><select id="u2" class="h-full w-full appearance-none border-2 border-r-[#888] border-b border-[#777] bg-white pl-[2px]"><option>Sheltered</option></select><span class="pointer-events-none absolute inset-y-[2px] right-[2px] grid w-[14px] place-items-center border-r border-b border-[#666] bg-[#f0f0f0] text-black"><svg class="h-[5px] w-2"><use href="#down"/></svg></span></span></div>
        <div role="tablist" class="mt-4 flex h-[31px] leading-[13px] [&_button]:w-[81px] [&_button]:rounded-t-md [&_button]:border-t [&_button]:border-r [&_button]:border-b [&_button]:border-[#777]">
          <button role="tab" class="border-l pt-1">Vertical wall</button>
          <button role="tab">Intermediate floor</button>
          <button role="tab" class="pt-1">Flat roof</button>
          <button role="tab">Solid ground<br>floor</button>
          <button role="tab" class="whitespace-nowrap">Pitched&nbsp; (attic)<br>roof</button>
          <button role="tab" aria-selected="true" class="border-r-2! border-b-transparent! pt-[3px] text-[12px] font-bold whitespace-nowrap text-black"><span class="mx-px block overflow-hidden border border-dotted border-[#555]">Internal wall</span></button>
          <button role="tab" class="w-auto! flex-1 border-r-2! pt-1 pl-1">Basement</button>
        </div>
        <div class="flex border-r-2 border-b-2 border-l border-[#777] pb-[7px]">
          <div class="pt-[49px] pl-[38px]">
            <div class="flex h-7 items-center"><label for="u3" class="w-[104px]">Number of air gaps</label><input id="u3" value="0" class="mr-3 h-[19px] w-[63px] border-t-2 border-r border-b border-l-2 border-t-[#777] border-r-[#e2e2e2] border-b-[#e2e2e2] border-l-[#777] bg-white pl-px"><span class="leading-[13px]">(standard resistance<br>0.18 m² °C/W)</span></div>
            <div class="mt-[23px] flex h-7 items-center"><label for="u4" class="w-[104px]">Thickness</label><input id="u4" value="0" class="mr-[9px] h-[19px] w-[63px] border-t-2 border-r border-b border-l-2 border-t-[#777] border-r-[#e2e2e2] border-b-[#e2e2e2] border-l-[#777] bg-white pl-px">mm</div>
            <div class="mt-[5px] flex h-7 items-center"><label for="u5" class="w-[104px]">k value</label><input id="u5" value="0" class="mr-[9px] h-[19px] w-[63px] border-t-2 border-r border-b border-l-2 border-t-[#777] border-r-[#e2e2e2] border-b-[#e2e2e2] border-l-[#777] bg-white pl-px">W/m °C</div>
            <div class="mt-10 ml-[14px] flex gap-[9px]">
              <button class="h-[25px] w-[81px] border-t border-r-2 border-b-2 border-l border-t-white border-r-[#777] border-b-[#777] border-l-white">Add Layer</button>
              <button class="h-[25px] w-[81px] border-t border-r-2 border-b-2 border-l border-t-white border-r-[#777] border-b-[#777] border-l-white whitespace-nowrap">Change Layer</button>
              <button class="h-[25px] w-[81px] border-t border-r-2 border-b-2 border-l border-t-white border-r-[#777] border-b-[#777] border-l-white">Delete Layer</button>
            </div>
          </div>
          <fieldset class="mt-2 mr-[18px] ml-auto h-[237px] w-[176px] border border-[#b4b4b4] pt-[7px]">
            <legend class="ml-[6px] flex w-[161px] justify-between pr-[13px] pl-[11px]"><label for="u6">Thickness</label><span>k value</span></legend>
            <select id="u6" multiple class="mx-2 block h-[184px] w-[158px] appearance-none border-t-2 border-r border-b border-l-2 border-t-[#777] border-r-[#e2e2e2] border-b-[#e2e2e2] border-l-[#777] bg-white"></select>
          </fieldset>
        </div>
      </div>
    </div>
  </section>

  <!-- callouts -->
  <p class="absolute top-[180px] left-[600px] w-[247px] bg-black/75 px-[25px] pt-[7px] pb-[6px] font-['Liberation_Sans',sans-serif] text-[30px] leading-9 whitespace-nowrap text-white">Defining Loads</p>
  <p class="absolute top-[176px] left-[1259px] w-[247px] bg-black/75 px-[25px] pt-[7px] pb-[6px] font-['Liberation_Sans',sans-serif] text-[30px] leading-9 text-white">Defining U<br>Values</p>
  <p class="absolute top-[505px] left-[587px] w-[247px] bg-black/75 px-[25px] pt-[7px] pb-[15px] font-['Liberation_Sans',sans-serif] text-[30px] leading-9 whitespace-nowrap text-white">Defining the<br>Amount of<br>Shadow</p>

  <!-- dotted leaders -->
  <svg class="pointer-events-none absolute inset-0 h-full w-full" aria-hidden="true">
    <g transform="translate(-2 -52)" fill="none" stroke="#000" stroke-width="10" stroke-linecap="round" stroke-dasharray="0 20">
      <path d="M569 160H770M784 165V226M1508 266H1569M1573 281V322M575 579.500H294M277 582V603"/>
      <g fill="#000" stroke="none"><circle cx="553" cy="160" r="13"/><circle cx="1573" cy="341" r="13"/><circle cx="277" cy="631" r="13"/></g>
    </g>
  </svg>
</main>
</body>
</html>
